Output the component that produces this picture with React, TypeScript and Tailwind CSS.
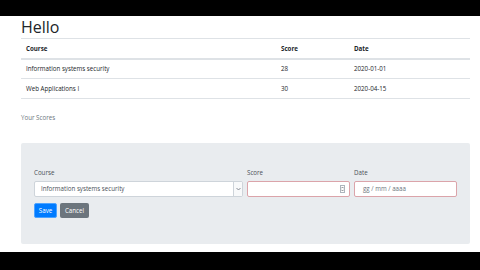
const rows = [
  { course: "Information systems security", score: "28", date: "2020-01-01" },
  { course: "Web Applications I", score: "30", date: "2020-04-15" },
];

export default function App() {
  return (
    <div className="w-[480px] h-[270px] bg-black flex flex-col overflow-hidden" style={{ fontFamily: '"Open Sans", "Noto Sans", sans-serif' }}>
      <div className="h-[16px] shrink-0" />
      <div className="h-[236px] shrink-0 bg-white px-[21px] pr-[10px] text-[#212529]">
        <h1 className="text-[16px] leading-[22px] mt-[0px] font-normal">Hello</h1>

        <table className="w-full text-[6.2px] text-[#212529] border-t border-[#dee2e6]">
          <thead>
            <tr className="h-[20px] border-b-2 border-[#dee2e6]">
              <th className="text-left font-bold pl-[5px] w-[260px]">Course</th>
              <th className="text-left font-bold w-[73px]">Score</th>
              <th className="text-left font-bold">Date</th>
            </tr>
          </thead>
          <tbody>
            {rows.map((r) => (
              <tr key={r.course} className="h-[20px] border-b border-[#dee2e6]">
                <td className="pl-[5px]">{r.course}</td>
                <td>{r.score}</td>
                <td>{r.date}</td>
              </tr>
            ))}
          </tbody>
        </table>

        <p className="mt-[13px] text-[6.2px] leading-[12px] text-[#6c757d]">Your Scores</p>

        <div className="mt-[19px] h-[101px] bg-[#e9ecef] rounded-[2px] pt-[26px] px-[13px]">
          <div className="flex gap-[4px]">
            <div className="w-[209px] flex flex-col">
              <label className="text-[6.2px] leading-[8px] mb-[4px] text-[#495057]">Course</label>
              <div className="h-[16px] bg-white border border-[#ced4da] rounded-[2px] flex items-center">
                <span className="flex-1 pl-[6px] text-[6.2px] text-[#495057]">Information systems security</span>
                <span className="w-[9px] h-full border-l border-[#ced4da] flex items-center justify-center bg-[#f8f9fa]">
                  <svg width="5" height="4" viewBox="0 0 5 4"><path d="M0.5 1 L2.5 3 L4.5 1" fill="none" stroke="#6c757d" strokeWidth="0.8" /></svg>
                </span>
              </div>
            </div>
            <div className="w-[103px] flex flex-col">
              <label className="text-[6.2px] leading-[8px] mb-[4px] text-[#495057]">Score</label>
              <div className="h-[16px] bg-white border border-[#dba4aa] rounded-[2px] flex items-center justify-end pr-[4px]">
                <span className="w-[5px] h-[8px] border border-[#adb5bd] flex flex-col items-center justify-center">
                  <svg width="3" height="6" viewBox="0 0 3 6"><path d="M0.3 2.3 L1.5 1 L2.7 2.3 M0.3 3.7 L1.5 5 L2.7 3.7" fill="none" stroke="#495057" strokeWidth="0.6" /></svg>
                </span>
              </div>
            </div>
            <div className="w-[103px] flex flex-col">
              <label className="text-[6.2px] leading-[8px] mb-[4px] text-[#495057]">Date</label>
              <div className="h-[16px] bg-white border border-[#dba4aa] rounded-[2px] flex items-center pl-[8px]">
                <span className="text-[6.2px] text-[#6c757d]">gg / mm / aaaa</span>
              </div>
            </div>
          </div>
          <div className="flex gap-[3px] mt-[6px]">
            <button className="h-[15px] w-[23px] bg-[#007bff] text-white text-[6.2px] rounded-[2px] border border-[#4da3ff]">Save</button>
            <button className="h-[15px] w-[29px] bg-[#6c757d] text-white text-[6.2px] rounded-[2px]">Cancel</button>
          </div>
        </div>
      </div>
      <div className="flex-1" />
    </div>
  );
}
